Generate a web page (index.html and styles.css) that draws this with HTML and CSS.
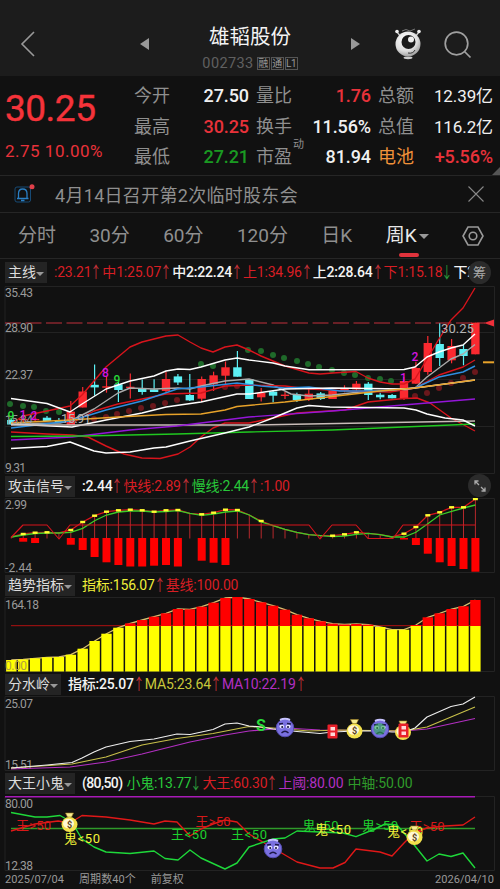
FILE: index.html
```
<!DOCTYPE html>
<html lang="zh-CN">

<head>
  <meta charset="UTF-8">
  <meta name="viewport" content="width=device-width, initial-scale=1.0">
  <title>雄韬股份 002733</title>
  <link rel="stylesheet" href="styles.css">
</head>

<body>
  <header class="topbar">
    <svg class="back" width="16" height="28" viewBox="0 0 16 28"><path d="M14 2 L2 14 L14 26" /></svg>
    <svg class="prev" width="9" height="12" viewBox="0 0 9 12"><path d="M9 0 V12 L0 6 Z" /></svg>
    <div class="stock">
      <h1>雄韬股份</h1>
      <div class="code">002733<span class="tag">融</span><span class="tag">通</span><span class="tag">L1</span></div>
    </div>
    <svg class="next" width="9" height="12" viewBox="0 0 9 12"><path d="M0 0 V12 L9 6 Z" /></svg>
    <svg class="robot" width="28" height="32" viewBox="0 0 28 32">
      <defs>
        <radialGradient id="ball" cx=".4" cy=".3" r=".8">
          <stop offset="0" stop-color="#fff" />
          <stop offset=".6" stop-color="#ddd" />
          <stop offset="1" stop-color="#888" />
        </radialGradient>
      </defs>
      <path d="M3 4 L7 9 M25 4 L21 9" stroke="#ccc" stroke-width="1.3" />
      <path d="M8 3 L12 1.500 L16 3 L21 1" stroke="#777" fill="none" />
      <circle cx="3" cy="3.500" r="1.800" fill="#eee" />
      <circle cx="25" cy="3.500" r="1.800" fill="#eee" />
      <ellipse cx="14" cy="29.800" rx="4.500" ry="1.400" fill="#ccc" />
      <circle cx="14" cy="16" r="12.500" fill="url(#ball)" />
      <circle cx="14.500" cy="14" r="7" fill="#1a1a1a" />
      <circle cx="17" cy="11.500" r="3" fill="#eee" />
      <path d="M14 25 Q19 26 21 22" stroke="#333" fill="none" />
    </svg>
    <svg class="search" width="28" height="28" viewBox="0 0 28 28"><circle cx="12.500" cy="12.500" r="11.300" /><path d="M20.500 20.500 L26.500 26.500" /></svg>
  </header>

  <section class="quote">
    <div class="price">
      <div class="last">30.25</div>
      <div class="change">2.75 10.00%</div>
    </div>
    <div class="grid">
      <span>今开</span><b>27.50</b><span>量比</span><b class="red">1.76</b><span>总额</span><b class="sm">12.39亿</b>
      <span>最高</span><b class="red">30.25</b><span>换手</span><b>11.56%</b><span>总值</span><b class="sm">116.2亿</b>
      <span>最低</span><b class="green">27.21</b><span class="pe">市盈<sup>动</sup></span><b>81.94</b><span class="orange">电池</span><b class="red">+5.56%</b>
    </div>
    <i class="corner"></i>
  </section>

  <section class="notice">
    <svg width="22" height="20" viewBox="0 0 22 20">
      <rect x="1" y="3" width="15.500" height="15" rx="2" fill="none" stroke="#174a75" />
      <path d="M3 14.500 H14.500 M4.500 14 V9.500 Q4.500 5 8.700 5 Q13 5 13 9.500 V14 M7 16.500 H10.500" fill="none" stroke="#2a7fc4" stroke-width="1.3" />
      <circle cx="18" cy="2.800" r="2.500" fill="#e0404a" />
    </svg>
    <p>4月14日召开第2次临时股东会</p>
    <svg class="close" width="18" height="18" viewBox="0 0 18 18"><path d="M1.500 1.500 L16.500 16.500 M16.500 1.500 L1.500 16.500" /></svg>
  </section>

  <nav class="tabs">
    <a>分时</a>
    <a>30分</a>
    <a>60分</a>
    <a>120分</a>
    <a>日K</a>
    <a class="active">周K<i class="caret"></i></a>
    <svg width="22" height="20" viewBox="0 0 22 20"><path d="M6 1 H16 L21 10 L16 19 H6 L1 10 Z" /><circle cx="11" cy="10" r="3.800" /></svg>
  </nav>

  <div class="legend main-legend">
    <span class="name">主线<i class="caret"></i></span>
    <span class="val red">:23.21<em>↑</em></span>
    <span class="val red">中1:25.07<em>↑</em></span>
    <span class="val white">中2:22.24<em>↑</em></span>
    <span class="val red">上1:34.96<em>↑</em></span>
    <span class="val white">上2:28.64<em>↑</em></span>
    <span class="val red">下1:15.18<em class="down">↓</em></span>
    <span class="val white">下2:</span>
    <span class="chip">筹</span>
  </div>
  <svg class="chart" id="main" width="500" height="189" viewBox="0 285 500 189">
    <path class="frame" d="M5 286.500 H494.500 V473.500 H5 Z M5 332.500 H494 M5 379.500 H494 M5 426.500 H494" />
    <path d="M5 323 H485" stroke="#c2303c" stroke-width="1.200" stroke-dasharray="16 4.500" />
    <g id="candles"></g>
    <g id="dots"></g>
    <g class="lines">
      <polyline stroke="#d8141c" points="11,424 23,416 47,411 70,406 82,395 94,381 106,367 118,357 130,347 142,342 154,339 166,336 178,335 190,342 201,348 213,352 225,347 237,345 249,350 261,356 285,366 309,373 320,374 333,373 356,371.500 368,378 380,382 392,384 404,384 415,379 427,359 439,339 451,320 463,308 475,288" />
      <polyline stroke="#fff" points="11,398.500 47,403.500 70,412 82,404 106,389 130,381 154,376 166,371 178,369 190,369.500 201,367 225,360 237,358 249,360 273,363 285,366 309,369.700 404,369.500 415,367 427,357 439,352 451,348 463,345 475,334" />
      <polyline stroke="#aaa" points="11,424 60,423 72,420 94,409 106,401 118,393 130,388 154,389 178,388 190,389 201,386 225,381 249,379 273,385 291,394 309,396 332,395 360,392 404,390 415,388 427,377 439,368 451,359 463,354 475,344.500" />
      <polyline stroke="#d8141c" points="70,424 94,411 118,404 166,394 201,393 225,386 249,385 285,386 309,389 350,391 390,392 415,388 439,375 463,367 475,360" />
      <polyline stroke="#2e8fe0" points="11,428 70,421 106,410 142,401 177,389 201,387 237,383 261,386 285,388 309,387 340,391 380,391 415,388 439,377 463,372 475,366" />
      <polyline stroke="#fff" points="11,424 72,427 106,420 142,413 166,407 201,402 237,394 250,394 285,389 332,388 404,389 415,388 475,380" />
      <polyline stroke="#e8a32a" points="11,423 70,420 118,417 166,414.500 201,414 225,410 237,406.500 285,402 332,396.500 380,391 415,388 475,380" />
      <polyline stroke="#d8141c" points="11,432 47,434 72,435 88,437 106,446 124,454 142,458 160,458.500 178,454 190,447 201,437 213,428 225,423 249,423 273,418 297,413 345,410 368,402 404,398.500 417,398 430,403 451,418 475,431" />
      <polyline stroke="#c8bcb8" points="11,425 250,425 475,421" />
      <polyline stroke="#9416d8" points="11,440 72,437 130,430 177,426 249,417 332,411 415,404 475,399" />
      <polyline stroke="#20c820" points="11,436.500 82,436 177,434 249,432 332,430 475,424" />
      <polyline stroke="#fff" points="11,448.500 47,446.500 70,442 94,451 106,453 130,452 154,448 166,447 190,441 225,433 249,427 273,418 297,408 309,405.500 330,407 404,408 416,410 427,414 445,418 463,420 475,426" />
    </g>
    <path d="M484 323 L494 319.500 V326.500 Z" fill="#f0303a" />
    <path d="M483 362.300 H494" stroke="#e8a32a" stroke-width="2" />
    <g class="axis">
      <text x="5" y="297" textLength="28">35.43</text>
      <text x="5" y="332" textLength="28">28.90</text>
      <text x="5" y="379" textLength="28">22.37</text>
      <text x="5" y="424" textLength="28">15.84</text>
      <text x="5" y="472" textLength="21">9.31</text>
      <text class="mark" x="61" y="423" textLength="30">15.91</text>
      <text class="mark" x="441" y="333" textLength="33">30.25</text>
    </g>
    <g class="count">
      <text class="g" x="11" y="420">9</text>
      <text x="23" y="419">1</text>
      <text x="34" y="420">2</text>
      <text x="105.500" y="377">8</text>
      <text class="g" x="117" y="384">9</text>
      <text x="403.500" y="382">1</text>
      <text x="415" y="361">2</text>
    </g>
  </svg>

  <div class="legend attack-legend">
    <span class="name">攻击信号<i class="caret"></i></span>
    <span class="val white">:2.44<em>↑</em></span>
    <span class="val red">快线:2.89<em>↑</em></span>
    <span class="val lime">慢线:2.44<em>↑</em></span>
    <span class="val red">:1.00</span>
    <span class="chip"><svg width="14" height="14" viewBox="0 0 14 14"><path d="M6 6 L2 2 M2 5.500 V2 H5.500 M8 8 L12 12 M12 8.500 V12 H8.500" /></svg></span>
  </div>
  <svg class="chart" id="attack" width="500" height="75" viewBox="0 498 500 75">
    <path class="frame" d="M5 498.500 H494.500 V572.500 H5 Z" />
    <g class="axis">
      <text x="5" y="509" textLength="22">2.99</text>
      <text x="5" y="571.500" textLength="27">-2.44</text>
    </g>
    <g id="attackBars"></g>
    <g class="lines thin">
      <polyline stroke="#d8141c" points="11,537.500 23,525 47,525 59,539 70,525 309,525 320,539 332,525 356,525 368,538.500 393,538.500 403,525 475,525" />
    </g>
  </svg>

  <div class="legend trend-legend">
    <span class="name">趋势指标<i class="caret"></i></span>
    <span class="val yellow">指标:156.07<em>↑</em></span>
    <span class="val red">基线:100.00</span>
  </div>
  <svg class="chart" id="trend" width="500" height="75" viewBox="0 597 500 75">
    <path class="frame" d="M5 597.500 H494.500 V671.500 H5 Z" />
    <path d="M11 625.700 H475" stroke="#b01010" />
    <g id="trendBars"></g>
    <g class="axis">
      <text x="5" y="608.500" textLength="34">164.18</text>
      <text class="zero" x="5" y="670" textLength="22">0.00</text>
    </g>
  </svg>

  <div class="legend water-legend">
    <span class="name">分水岭<i class="caret"></i></span>
    <span class="val white">指标:25.07<em>↑</em></span>
    <span class="val khaki">MA5:23.64<em>↑</em></span>
    <span class="val purple">MA10:22.19<em>↑</em></span>
  </div>
  <svg class="chart" id="water" width="500" height="75" viewBox="0 696 500 75">
    <defs>
      <g id="face">
        <circle r="8.800" fill="#7a70e0" />
        <circle r="8.800" fill="none" stroke="#544cb0" />
        <path d="M-5 -8 Q0 -10.500 5 -8" stroke="#c8c4ff" stroke-width="2" fill="none" />
        <ellipse cx="-3.200" cy="-1.500" rx="2.300" ry="2" fill="#e6e4ff" />
        <ellipse cx="3.200" cy="-1.500" rx="2.300" ry="2" fill="#e6e4ff" />
        <path d="M-6 -4 L-2 -4.500 M6 -4 L2 -4.500 M-3.500 5 Q0 1.500 3.500 5" stroke="#1d1848" stroke-width="1.300" fill="none" />
        <circle cx="-2.800" cy="-1" r="1" fill="#161238" />
        <circle cx="3" cy="-1" r="1" fill="#161238" />
      </g>
      <g id="bag">
        <path d="M-4 -10 L-2 -6 H2 L4 -10 Z" fill="#f5ec90" stroke="#a08020" stroke-width=".6" />
        <ellipse cy="1.500" rx="8" ry="7.500" fill="#f2e04c" />
        <ellipse cx="-1" cy="0.500" rx="5.500" ry="4.800" fill="#fff8d4" />
        <text class="dollar" y="4.800">$</text>
      </g>
      <g id="buy">
        <rect x="-5" y="-7" width="10" height="14" rx="1" fill="#e8202a" />
        <rect x="-2" y="-4.500" width="4.500" height="3.500" fill="#ffd8d8" />
        <rect x="-2" y="1" width="4.500" height="3.500" fill="#ffd8d8" />
      </g>
    </defs>
    <path class="frame" d="M5 696.500 H494.500 V770.500 H5 Z" />
    <g class="axis">
      <text x="5" y="708" textLength="28">25.07</text>
      <text x="5" y="769" textLength="28">15.51</text>
    </g>
    <g class="lines thin">
      <polyline stroke="#b32fc2" points="11,769 70,767 106,762 142,754 190,742 225,735 249,731 285,728 320,730 404,731 427,729 475,718.500" />
      <polyline stroke="#c8c04a" points="11,768 72,764 106,757 142,745 177,738.500 213,733.500 249,726.500 273,728 309,731 340,730 404,731 427,727 451,717 475,707" />
      <polyline stroke="#eee" points="11,768 47,765 72,762.500 82,758 94,752 106,747 130,741.500 154,739 177,734 190,734.500 213,729.500 225,724 237,723 249,726 261,727 273,729 297,731.500 320,733.500 332,732 356,731 380,731 392,732 404,732 415,728 427,717 451,706.500 463,704 475,697" />
    </g>
    <text class="sell" x="261" y="731">S</text>
    <use href="#face" x="285" y="728" />
    <use href="#buy" x="332.500" y="731.500" />
    <use href="#bag" x="354.500" y="729.500" />
    <use href="#face" x="380" y="729" />
    <circle cx="379.500" cy="729" r="6" fill="#2fae50" opacity=".6" />
    <use href="#bag" x="403" y="731" />
    <use href="#buy" x="403.500" y="730.500" />
  </svg>

  <div class="legend ghost-legend">
    <span class="name">大王小鬼<i class="caret"></i></span>
    <span class="val white">(80,50)</span>
    <span class="val lime">小鬼:13.77<em class="down">↓</em></span>
    <span class="val red">大王:60.30<em>↑</em></span>
    <span class="val purple">上阈:80.00</span>
    <span class="val green">中轴:50.00</span>
  </div>
  <svg class="chart" id="ghost" width="500" height="75" viewBox="0 796 500 75">
    <path class="frame" d="M5 796.500 H494.500 V870.500 H5 Z" />
    <g class="axis">
      <text x="5" y="807.500" textLength="28">80.00</text>
      <text x="5" y="869.500" textLength="28">12.38</text>
    </g>
    <g class="lines">
      <polyline stroke="#a81ab8" points="5,796.700 475,796.700" />
      <polyline stroke="#2f9a2a" stroke-width="1" points="11,828.500 475,828.500" />
      <polyline stroke="#e01818" points="11,831 35,824 58,821 70,823 82,815.500 106,817 130,820 154,824 165,821 177,822 190,836 201,829 213,824 225,820 237,822 249,834 273,848 297,862 320,868 333,868 345,862.500 356,849 380,852 392,856 404,843 415,832 427,828 445,826 463,825 475,817" />
      <polyline stroke="#1ed83a" points="11,812.500 35,817 47,817 60,815.500 68,820 76,829 82,839 94,847 106,852 130,853.500 154,851 165,858.500 178,860 190,850 201,858 225,869 237,863 249,847 273,839 285,838 297,831 343,833 356,836.700 375,829 385,824 397,825 411,841 427,861 439,854 451,856.500 463,853 475,868" />
    </g>
    <g class="labels">
      <text class="r" x="16" y="829.500" textLength="35">王&gt;50</text>
      <text class="y" x="64" y="842.500" textLength="36">鬼&lt;50</text>
      <text class="g" x="171" y="839" textLength="36">王&lt;50</text>
      <text class="r" x="195.500" y="826" textLength="35">王&gt;50</text>
      <text class="g" x="231" y="839" textLength="36">王&lt;50</text>
      <text class="g" x="302.500" y="830" textLength="36">鬼&gt;50</text>
      <text class="y" x="315" y="834" textLength="36">鬼&lt;50</text>
      <text class="g" x="362" y="830" textLength="36">鬼&gt;50</text>
      <text class="y" x="387" y="835.500" textLength="36">鬼&lt;50</text>
      <text class="r" x="409.500" y="831" textLength="35">王&gt;50</text>
    </g>
    <use href="#bag" x="69.500" y="823" />
    <use href="#face" x="273" y="849" />
    <use href="#bag" x="414.500" y="836" />
  </svg>

  <footer>
    <span>2025/07/04</span>
    <span>周期数40个</span>
    <span>前复权</span>
    <span class="end">2026/04/10</span>
  </footer>

  <script>
    const STEP = 11.9;
    const x = i => 11.3 + STEP * i;
    const put = (id, html) => document.getElementById(id).innerHTML = html;
    const rect = (cx, w, y1, y2, fill) =>
      `<rect x="${(cx - w / 2).toFixed(1)}" y="${y1}" width="${w}" height="${(y2 - y1).toFixed(1)}" fill="${fill}"/>`;

    // 涨跌, 实体上, 实体下, 最高, 最低
    const candles = [
      ['d', 420, 424.5, 418, 425], ['u', 419, 420.3, 416, 422], ['u', 419, 420.3, 415, 421], ['d', 417.7, 421, 416, 421],
      ['d', 420.5, 422, 418, 423], ['u', 411.7, 425, 401, 425], ['u', 391.5, 407.5, 387, 407.5], ['d', 384.8, 387.4, 364.5, 395.7],
      ['u', 386.3, 387.7, 376, 392.7], ['d', 384.4, 390, 382.5, 402], ['u', 386.7, 388, 373.5, 398.5], ['d', 388.4, 392, 379.5, 394.7],
      ['d', 389.4, 392, 379.3, 392], ['u', 379, 391, 371.5, 392], ['d', 376.4, 382.5, 374, 385], ['d', 395, 400.4, 374, 401],
      ['u', 379, 398.7, 376.5, 402], ['u', 375.3, 384.3, 371.7, 391], ['u', 367.3, 375.7, 361.5, 384.5], ['d', 367.3, 376.7, 351, 376.7],
      ['d', 379, 399, 379, 399], ['u', 393, 397.3, 388, 401.5], ['d', 391.6, 395.7, 390.6, 402.3], ['u', 394.6, 396, 392, 399],
      ['d', 394.5, 400, 392.7, 402], ['u', 393.7, 399.5, 388.5, 401], ['d', 393.4, 399, 392, 400], ['u', 390.7, 399, 390, 399],
      ['u', 388.3, 390.7, 385.3, 392.3], ['u', 383.7, 389.4, 381, 391], ['d', 383.7, 395, 382, 400], ['d', 394.7, 397.3, 392.7, 399.3],
      ['d', 395, 398.3, 394, 398.3], ['u', 381, 399, 377, 400], ['u', 368, 383.7, 361.7, 384], ['u', 343, 372, 336, 374.7],
      ['d', 344, 358, 323.3, 366], ['u', 346, 360.3, 339, 363.3], ['d', 349, 356, 344.7, 365.3], ['u', 322.7, 354.3, 322.7, 354.3]
    ];
    put('candles', candles.map(([t, a, b, h, l], i) => {
      const c = t === 'u' ? '#fa2a30' : '#5cf0f4';
      return rect(x(i), 1.2, h, l, c) + rect(x(i), 8.4, a, b, c);
    }).join(''));

    const greenDots = [[10, 404], [23, 406], [34, 407], [46, 411], [59, 412], [201, 364], [213, 366], [248, 350], [261, 351],
      [273, 355], [284, 358], [297, 361], [308, 364], [319, 367], [332, 370], [344, 373], [355, 375], [368, 378], [380, 379], [391, 381]];
    const redDots = [[94, 419], [106, 417], [117, 414], [129, 411], [141, 408], [153, 406], [165, 403], [177, 400], [225, 387],
      [237, 386], [415, 396], [427, 393], [439, 388], [451, 383], [463, 378], [475, 372]];
    const dot = c => p => `<circle cx="${p[0]}" cy="${p[1]}" r="3" fill="${c}"/>`;
    put('dots', greenDots.map(dot('#1f6a2a')).join('') + redDots.map(dot('#6a181c')).join(''));

    // 攻击信号
    const slow = [537, 535, 533.5, 533, 533, 532.3, 528.3, 520.7, 515, 512, 511, 511, 512, 511.5, 510.7, 513.3, 515.3, 514, 512, 511,
      515, 522, 525.7, 529.3, 532.3, 534.7, 535.7, 536.7, 536, 534.3, 533.3, 534.7, 537, 537, 532.3, 523.7, 515, 511.3, 508, 505];
    const fast = { 1: 534, 2: 532.7, 3: 532.3, 5: 530, 6: 522, 7: 515.7, 8: 511.7, 9: 510.3, 10: 509.7, 11: 510.3, 12: 511.7,
      13: 510.3, 14: 510, 16: 514.3, 17: 512.7, 18: 509.7, 19: 510, 21: 521, 27: 535.7, 28: 534.3, 29: 532.3, 33: 533.7,
      34: 527, 35: 515.3, 36: 512.3, 37: 507.3, 38: 507.3, 39: 499 };
    const depth = { 1: 541.7, 2: 543, 5: 544.7, 6: 550, 7: 557, 8: 562.3, 9: 565, 10: 566.5, 11: 566.5, 12: 565.7, 13: 565,
      14: 566.5, 16: 560.7, 17: 562.7, 18: 565, 33: 539.5, 34: 545, 35: 553.7, 36: 562.3, 37: 566, 38: 569, 39: 571.7 };
    const line = (pts, c) => `<polyline points="${pts.join(' ')}" fill="none" stroke="${c}" stroke-width="1.3"/>`;
    put('attackBars',
      slow.map((y, i) => rect(x(i), 1, Math.min(y, fast[i] || y), 538.5, '#b5282c')).join('') +
      Object.keys(depth).map(i => rect(x(+i), 8, 538, depth[i], '#ff0000')).join('') +
      line(slow.map((y, i) => x(i).toFixed(1) + ',' + (fast[i] || y)), '#d8141c') +
      line(slow.map((y, i) => x(i).toFixed(1) + ',' + y), '#3ccc28') +
      Object.keys(fast).map(i => rect(x(+i), 5, fast[i] - 1.2, fast[i] + 1.2, '#ffff30')).join(''));

    // 趋势指标
    const trend = [660, 659.5, 658.3, 657.3, 657, 654.7, 648.7, 641, 633.7, 627.7, 623.3, 620, 616.7, 613.3, 609, 609.3, 606.7, 602.7,
      598, 597, 599, 602.3, 605.7, 609.7, 614.7, 618.3, 621.3, 623.7, 624.5, 624, 624.7, 627, 629.7, 629.7, 625, 617.3, 613.3, 609, 606.3, 600];
    put('trendBars',
      line(trend.map((y, i) => x(i).toFixed(1) + ',' + y), '#d8c070') +
      trend.map((y, i) =>
        (y < 626 ? rect(x(i), 10.4, y, 626, '#ff0000') : '') + rect(x(i), 10.4, Math.max(y, 626), 671.5, '#ffff00')).join(''));
  </script>
</body>

</html>
```
FILE: styles.css
```
* {
  box-sizing: border-box;
}

body {
  margin: 0;
  width: 500px;
  height: 889px;
  overflow: hidden;
  background: #111;
  color: #8f8f8f;
  font-family: Roboto, "Noto Sans CJK SC", sans-serif;
}

svg {
  display: block;
  flex: none;
}

i,
em {
  font-style: normal;
}

.red { color: #e8323a; }
.green { color: #1a9a22; }
.orange { color: #f0923a; }

/* header */
.topbar {
  display: flex;
  height: 76px;
  padding: 24px 28px 0 20px;
  background: #1c1c1c;
}

.back {
  margin-top: 6px;
  fill: none;
  stroke: #999;
  stroke-width: 1.6;
}

.prev,
.next {
  margin-top: 14px;
  fill: #999;
}

.prev { margin-left: 104px; }

.stock {
  width: 203px;
  text-align: center;
}

.stock h1 {
  margin: 0;
  font-size: 20.5px;
  font-weight: 400;
  line-height: 26px;
  color: #f4f4f4;
}

.code {
  display: flex;
  justify-content: center;
  align-items: center;
  height: 26px;
  font-size: 14.5px;
  letter-spacing: 0.4px;
  color: #606060;
}

.tag {
  width: 13px;
  height: 13px;
  margin-left: 1px;
  border: 1px solid #555;
  font-size: 10px;
  line-height: 11px;
  letter-spacing: -0.4px;
  color: #999;
}

.tag:first-child { margin-left: 3px; }

.robot {
  margin: 4px 0 0 34px;
}

.search {
  margin: 7px 0 0 22px;
  fill: none;
  stroke: #a0a0a0;
  stroke-width: 1.7;
}

/* quote */
.quote {
  position: relative;
  display: flex;
  height: 100px;
  border-bottom: 1px solid #262626;
}

.price {
  width: 134px;
  padding: 12px 0 0 5px;
  color: #f5333a;
}

.last {
  font-size: 37px;
  font-weight: 400;
  line-height: 42px;
  letter-spacing: -0.5px;
  -webkit-text-stroke: 0.4px #f5333a;
}

.change {
  margin-top: 9px;
  font-size: 17px;
  line-height: 24px;
  letter-spacing: 0.5px;
  white-space: nowrap;
  color: #e8323a;
}

.grid {
  display: grid;
  grid-template-columns: 37px 78px 44px 78px 44px 78px;
  grid-template-rows: repeat(3, 30.5px);
  align-items: center;
  padding-top: 5px;
  font-size: 18px;
  line-height: 24px;
  white-space: nowrap;
}

.grid span:not(:nth-child(6n + 1)) {
  padding-left: 7px;
}

.grid b {
  font-weight: 500;
  text-align: right;
  letter-spacing: -0.1px;
}

.grid b:not([class]),
.grid .sm {
  color: #f0f0f0;
}

.grid .sm {
  font-size: 17px;
  font-weight: 400;
}

.pe { position: relative; }

.pe sup {
  position: absolute;
  left: 44px;
  top: -7px;
  font-size: 11px;
  line-height: 14px;
}

.corner {
  position: absolute;
  right: 0;
  bottom: 0;
  border-left: 8px solid transparent;
  border-bottom: 8px solid #555;
}

/* notice */
.notice {
  display: flex;
  align-items: center;
  height: 37px;
  padding: 0 15px 0 14px;
  border-bottom: 1px solid #262626;
}

.notice p {
  flex: 1;
  margin: 0 0 0 19px;
  font-size: 18px;
  letter-spacing: 0.3px;
}

.close {
  fill: none;
  stroke: #888;
  stroke-width: 1.1;
}

/* tabs */
.tabs {
  display: flex;
  align-items: center;
  height: 46px;
  padding: 0 16px 0 18px;
  border-bottom: 1px solid #262626;
  font-size: 19px;
  line-height: 44px;
  justify-content: space-between;
}

.tabs a { position: relative; }

.tabs .active {
  color: #e8e8e8;
}

.tabs .active::after {
  content: "";
  position: absolute;
  left: 13px;
  bottom: 1px;
  width: 20px;
  height: 4px;
  border-radius: 2px;
  background: #e0333c;
}

.tabs svg {
  fill: none;
  stroke: #999;
  stroke-width: 1.6;
}

.caret {
  display: inline-block;
  margin-left: 2px;
  border: 5px solid transparent;
  border-top-color: #999;
  border-bottom: 0;
  vertical-align: 3px;
}

/* indicator rows */
.legend {
  position: relative;
  display: flex;
  align-items: center;
  height: 24px;
  padding-left: 5px;
  overflow: hidden;
  font-size: 14px;
  line-height: 21px;
  white-space: nowrap;
}

.main-legend { height: 26px; }
.ghost-legend { height: 25px; }

.legend .name {
  height: 21px;
  padding: 0 3px;
  background: #242424;
  color: #ddd;
}

.legend .caret {
  margin-left: 0;
  border-width: 4px;
  border-bottom: 0;
  vertical-align: 1px;
}

.legend .val {
  margin-left: 7px;
  letter-spacing: -0.2px;
}

.legend .val + .val { margin-left: 6px; }

.legend em {
  display: inline-block;
  width: 5px;
  height: 21px;
  color: #c8323a;
  font-size: 16px;
  font-weight: 400;
  vertical-align: top;
  text-indent: -1px;
  transform: scaleX(0.7);
  transform-origin: 0 0;
}

.legend em.down { color: #2a9a3a; }

.main-legend .val:last-of-type { letter-spacing: 0; }

.ghost-legend .val + .val { margin-left: 4px; }
.ghost-legend em { margin-right: 2px; }

.legend .red { color: #d81e24; }
.legend .white { color: #f4f4f4; font-weight: 500; }
.legend .lime { color: #28c83a; }
.legend .yellow { color: #f0f03a; }
.legend .khaki { color: #c8c83a; }
.legend .purple { color: #b32fc2; }
.legend .green { color: #2f9a2a; }

.ghost-legend .white { letter-spacing: -0.6px; }

.chip {
  position: absolute;
  right: 9px;
  top: 2px;
  display: flex;
  align-items: center;
  justify-content: center;
  width: 23px;
  height: 23px;
  border-radius: 50%;
  background: #2b2b2b;
  color: #aaa;
  font-size: 13px;
}

.attack-legend .chip { top: 0; }

.chip svg {
  fill: none;
  stroke: #aaa;
  stroke-width: 1.3;
}

/* charts */
.frame {
  fill: none;
  stroke: #232323;
}

.lines polyline {
  fill: none;
  stroke-width: 1.4;
  stroke-linejoin: round;
}

.lines.thin polyline { stroke-width: 1.1; }

.axis text {
  fill: #9a9a9a;
  font-size: 12px;
}

.axis .mark {
  font-size: 13px;
  fill: #b4b4b4;
}

.axis .zero { fill: #b0a040; }

.count text {
  fill: #d414e0;
  font-size: 12px;
  font-weight: 500;
  text-anchor: middle;
}

.count .g { fill: #28d83a; }

.dollar {
  font-size: 9px;
  font-weight: 700;
  fill: #5a4020;
  text-anchor: middle;
}

.sell {
  fill: #28d83a;
  font-size: 16px;
  font-weight: 700;
  text-anchor: middle;
}

.labels text { font-size: 13px; }
.labels .r { fill: #d81818; }
.labels .g { fill: #1ed02e; }
.labels .y { fill: #f4f43a; }

footer {
  display: flex;
  height: 18px;
  padding: 0 6px 0 5px;
  gap: 15px;
  font-size: 11px;
  line-height: 17px;
  letter-spacing: 0.05px;
  color: #999;
}

footer .end { margin-left: auto; }
```
